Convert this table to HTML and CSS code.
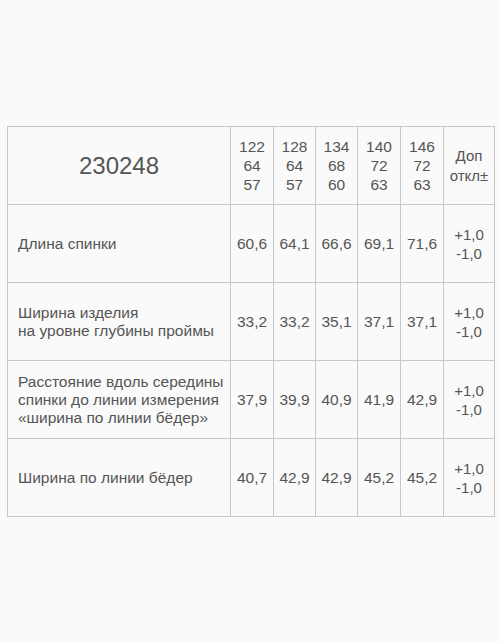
FILE: index.html
```html
<!DOCTYPE html>
<html>
<head>
<meta charset="utf-8">
<link rel="stylesheet" href="styles.css">
</head>
<body>
<table class="sizes">
  <colgroup>
    <col class="c-name">
    <col class="c1"><col class="c2"><col class="c3"><col class="c4"><col class="c5">
    <col class="c-tol">
  </colgroup>
  <tr class="head">
    <td class="model">230248</td>
    <td class="size">122<br>64<br>57</td>
    <td class="size">128<br>64<br>57</td>
    <td class="size">134<br>68<br>60</td>
    <td class="size">140<br>72<br>63</td>
    <td class="size">146<br>72<br>63</td>
    <td class="tolh">Доп<br>откл±</td>
  </tr>
  <tr>
    <td class="name">Длина спинки</td>
    <td class="val">60,6</td><td class="val">64,1</td><td class="val">66,6</td><td class="val">69,1</td><td class="val">71,6</td>
    <td class="tol">+1,0<br>-1,0</td>
  </tr>
  <tr>
    <td class="name">Ширина изделия<br>на уровне глубины проймы</td>
    <td class="val">33,2</td><td class="val">33,2</td><td class="val">35,1</td><td class="val">37,1</td><td class="val">37,1</td>
    <td class="tol">+1,0<br>-1,0</td>
  </tr>
  <tr>
    <td class="name">Расстояние вдоль середины<br>спинки до линии измерения<br>«ширина по линии бёдер»</td>
    <td class="val">37,9</td><td class="val">39,9</td><td class="val">40,9</td><td class="val">41,9</td><td class="val">42,9</td>
    <td class="tol">+1,0<br>-1,0</td>
  </tr>
  <tr>
    <td class="name">Ширина по линии бёдер</td>
    <td class="val">40,7</td><td class="val">42,9</td><td class="val">42,9</td><td class="val">45,2</td><td class="val">45,2</td>
    <td class="tol">+1,0<br>-1,0</td>
  </tr>
</table>
</body>
</html>
```
FILE: styles.css
```css
html, body {
  margin: 0;
  padding: 0;
  background: #fafafa;
}
body {
  padding: 126px 0 0 7px;
  font-family: "Liberation Sans", Arial, sans-serif;
  color: #555;
}
.sizes {
  border-collapse: collapse;
  table-layout: fixed;
  width: 487px;
  background: #fafafa;
}
.c-name { width: 223px; }
.c1 { width: 43px; }
.c2 { width: 42px; }
.c3 { width: 42px; }
.c4 { width: 43px; }
.c5 { width: 43px; }
.c-tol { width: 51px; }
.sizes td {
  border: 1px solid #c8c8c8;
  height: 77px;
  padding: 0;
  vertical-align: middle;
  font-size: 15.5px;
  line-height: 18px;
  white-space: nowrap;
}
.sizes td.model {
  text-align: center;
  font-size: 24px;
}
.sizes td.size {
  text-align: center;
  line-height: 19px;
}
.sizes td.tolh {
  text-align: center;
  font-size: 15px;
  line-height: 20px;
}
.sizes td.name {
  padding: 0 0 0 10px;
}
.sizes td.val {
  text-align: center;
}
.sizes td.tol {
  text-align: center;
  font-size: 15px;
  line-height: 19px;
}
```
